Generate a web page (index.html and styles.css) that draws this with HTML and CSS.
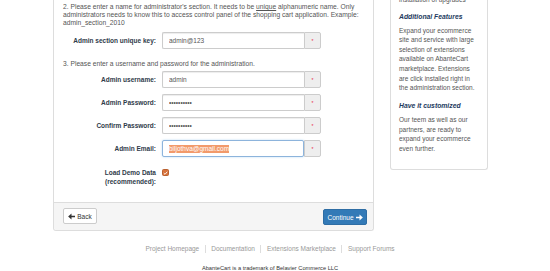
FILE: index.html
```html
<!DOCTYPE html>
<html lang="en">
<head>
    <meta charset="UTF-8">
    <meta name="viewport" content="width=device-width, initial-scale=1.0">
    <title>AbanteCart Installation - Configuration</title>
    <link rel="stylesheet" href="styles.css">
</head>
<body>
    <div class="wrap">
        <div class="main panel">
            <div class="panel-body">
                <p class="note">2. Please enter a name for administrator's section. It needs to be <u>unique</u> alphanumeric name. Only administrators needs to know this to access control panel of the shopping cart application. Example: admin_section_2010</p>
                <div class="form-row">
                    <label class="control-label">Admin section unique key:</label>
                    <div class="input-group">
                        <input class="form-control" type="text" value="admin@123">
                        <span class="addon">*</span>
                    </div>
                </div>

                <p class="note gap">3. Please enter a username and password for the administration.</p>
                <div class="form-row">
                    <label class="control-label">Admin username:</label>
                    <div class="input-group">
                        <input class="form-control" type="text" value="admin">
                        <span class="addon">*</span>
                    </div>
                </div>
                <div class="form-row">
                    <label class="control-label">Admin Password:</label>
                    <div class="input-group">
                        <input class="form-control" type="password" value="1234567890">
                        <span class="addon">*</span>
                    </div>
                </div>
                <div class="form-row">
                    <label class="control-label">Confirm Password:</label>
                    <div class="input-group">
                        <input class="form-control" type="password" value="1234567890">
                        <span class="addon">*</span>
                    </div>
                </div>
                <div class="form-row">
                    <label class="control-label">Admin Email:</label>
                    <div class="input-group">
                        <div class="form-control focused"><span class="selected">biljothva@gmail.com</span></div>
                        <span class="addon">*</span>
                    </div>
                </div>
                <div class="form-row top">
                    <label class="control-label two-line">Load Demo Data<br>(recommended):</label>
                    <div class="check-wrap">
                        <span class="checkbox">
                            <svg viewBox="0 0 10 10" width="6" height="6"><path d="M1.5 5.2 L4 7.6 L8.6 2.4" fill="none" stroke="#fff" stroke-width="1.8"/></svg>
                        </span>
                    </div>
                </div>
            </div>
            <div class="panel-footer">
                <button class="btn btn-default">
                    <svg class="icon" viewBox="0 0 10 10"><path d="M10 3.8 H5 V0.6 L0.2 5 L5 9.4 V6.2 H10 Z" fill="#333"/></svg>
                    Back
                </button>
                <button class="btn btn-primary">
                    Continue
                    <svg class="icon" viewBox="0 0 10 10"><path d="M0 3.8 H5 V0.6 L9.8 5 L5 9.4 V6.2 H0 Z" fill="#fff"/></svg>
                </button>
            </div>
        </div>

        <div class="sidebar panel">
            <p>installation of upgrades</p>
            <h4 class="first">Additional Features</h4>
            <p>Expand your ecommerce site and service with large selection of extensions available on AbanteCart marketplace. Extensions are click installed right in the administration section.</p>
            <h4>Have it customized</h4>
            <p>Our teem as well as our partners, are ready to expand your ecommerce even further.</p>
        </div>
    </div>

    <div class="footer">
        <div class="links">
            <a href="#">Project Homepage</a><span class="sep"></span><a href="#">Documentation</a><span class="sep"></span><a href="#">Extensions Marketplace</a><span class="sep"></span><a href="#">Support Forums</a>
        </div>
        <div class="copy">AbanteCart is a trademark of Belavier Commerce LLC</div>
    </div>
</body>
</html>
```
FILE: styles.css
```css
body {
    font-family: 'Liberation Sans', Arial, sans-serif;
    margin: 0;
    padding: 0;
    background-color: #fff;
    color: #555;
    font-size: 6.5px;
}
.wrap {
    display: flex;
    align-items: flex-start;
    gap: 16px;
    padding-left: 53px;
}
.panel {
    background-color: #fff;
    border: 1px solid #ddd;
    border-top: none;
    border-radius: 0 0 3px 3px;
    box-sizing: border-box;
}
.main {
    width: 321px;
}
.panel-body {
    padding: 3px 9px 16px 9px;
}
.note {
    margin: 0 0 5px 0;
    font-size: 6.7px;
    line-height: 8px;
}
.note.gap {
    margin: 11px 0 3px 0;
}
.form-row {
    display: grid;
    grid-template-columns: 93px 159px;
    column-gap: 6px;
    align-items: center;
    margin-bottom: 6px;
}
.form-row.top {
    align-items: start;
    margin-bottom: 0;
}
.control-label {
    text-align: right;
    font-weight: bold;
    color: #2f3b4a;
}
.control-label.two-line {
    line-height: 9px;
    padding-top: 5px;
}
.input-group {
    display: flex;
    height: 17px;
}
.form-control {
    flex: 1;
    min-width: 0;
    box-sizing: border-box;
    height: 17px;
    margin: 0;
    padding: 0 6px;
    border: 1px solid #ccc;
    border-right: none;
    border-radius: 2px 0 0 2px;
    box-shadow: inset 0 1px 1px rgba(0,0,0,0.075);
    font-family: inherit;
    font-size: 6.5px;
    color: #555;
    background: #fff;
    outline: none;
}
.form-control.focused {
    display: flex;
    align-items: center;
    border: 1px solid #8db4dc;
    border-radius: 2px;
    box-shadow: 0 0 2px rgba(102,175,233,0.5);
}
.selected {
    background-color: #f29a6b;
    color: #fff;
    line-height: 8px;
}
.addon {
    width: 17px;
    box-sizing: border-box;
    background-color: #eee;
    border: 1px solid #ccc;
    border-radius: 0 2px 2px 0;
    color: #e8193c;
    font-size: 5px;
    display: flex;
    align-items: center;
    justify-content: center;
}
.check-wrap {
    padding-top: 6px;
}
.checkbox {
    display: flex;
    align-items: center;
    justify-content: center;
    width: 7px;
    height: 7px;
    background-color: #d8733d;
    border: 1px solid #b9602f;
    border-radius: 1.5px;
    box-sizing: border-box;
}
.panel-footer {
    display: flex;
    justify-content: space-between;
    align-items: flex-start;
    background-color: #f5f5f5;
    border-top: 1px solid #ddd;
    padding: 5px 6px 5px 9px;
    border-radius: 0 0 3px 3px;
}
.btn {
    display: flex;
    align-items: center;
    gap: 2px;
    height: 16px;
    box-sizing: border-box;
    padding: 0;
    font-family: inherit;
    font-size: 6.5px;
    border-radius: 2px;
    cursor: pointer;
}
.btn .icon {
    width: 7px;
    height: 7px;
}
.btn-default {
    width: 34px;
    justify-content: center;
    background-color: #fff;
    border: 1px solid #ccc;
    color: #333;
}
.btn-primary {
    width: 44px;
    justify-content: center;
    margin-top: 1px;
    background-color: #337ab7;
    border: 1px solid #2e6da4;
    color: #fff;
}
.sidebar {
    width: 98px;
    margin-top: -5px;
    padding: 0 8px 16px 8px;
    line-height: 9.6px;
}
.sidebar p {
    margin: 0;
}
.sidebar h4 {
    margin: 8.4px 0 4.4px 0;
    font-size: 6.8px;
    font-style: italic;
    font-weight: bold;
    color: #233a5e;
    line-height: 9.6px;
}
.sidebar h4.first {
    margin-top: 7px;
}
.footer {
    width: 434px;
    margin-left: 53px;
    text-align: center;
}
.links {
    margin-top: 13px;
    line-height: 9px;
}
.links a {
    color: #999;
    text-decoration: none;
}
.sep {
    display: inline-block;
    width: 1px;
    height: 8px;
    background-color: #ddd;
    margin: 0 5.5px;
    vertical-align: middle;
}
.copy {
    margin-top: 11px;
    font-size: 5.7px;
    color: #333;
    line-height: 8px;
}
```
